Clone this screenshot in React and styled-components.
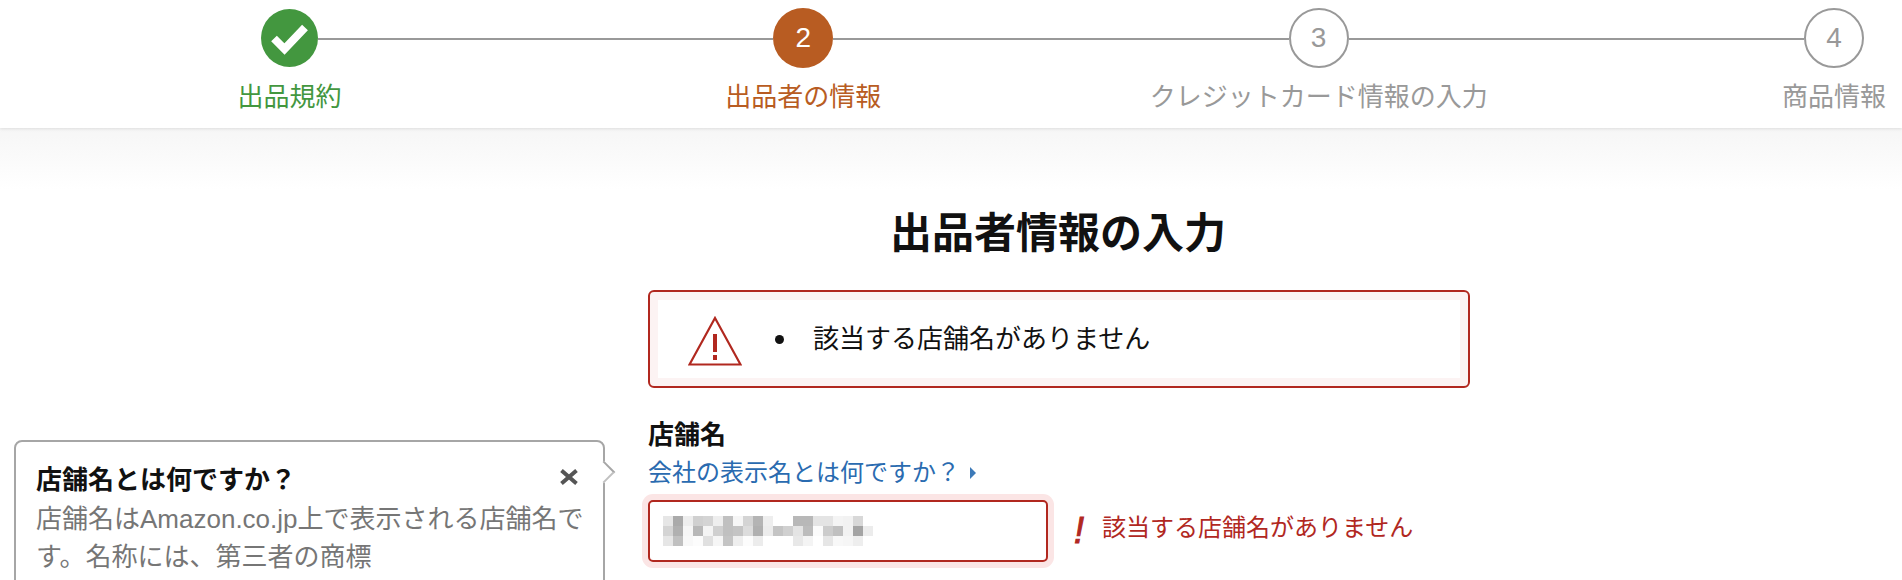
import React from 'react';
import styled, { createGlobalStyle } from 'styled-components';

const FONT = '"Liberation Sans", "Noto Sans CJK JP", sans-serif';
const GREEN = '#43973f';
const ORANGE = '#b85c22';
const GRAY = '#999';
const RED = '#b1281f';

const GlobalStyle = createGlobalStyle`
  html, body {
    margin: 0;
    background: #fff;
    font-family: ${FONT};
  }
`;

const Page = styled.div`
  position: relative;
  height: 580px;
  overflow: hidden;
`;

// Stepper
const Header = styled.header`
  position: relative;
  display: flex;
  box-sizing: border-box;
  height: 128px;
  padding: 8px 38px 0 261px;
  background: #fff;
  box-shadow: 0 1px 3px rgba(0, 0, 0, 0.1);
`;
const Step = styled.div`
  display: flex;
  flex-direction: column;
  align-items: center;
  width: ${props => (props.done ? '57px' : '60px')};
  color: ${props => props.color};
`;
const Circle = styled.div`
  display: flex;
  flex: none;
  align-items: center;
  justify-content: center;
  box-sizing: border-box;
  width: 60px;
  height: 60px;
  border-radius: 50%;
  border: 2px solid ${props => (props.filled ? 'transparent' : GRAY)};
  background: ${props => (props.filled ? props.color : '#fff')};
  color: ${props => (props.filled ? '#fff' : GRAY)};
  font-size: 28px;
`;
const DoneCircle = styled.div`
  display: flex;
  flex: none;
  width: 57px;
  height: 58px;
  margin: 1px 0;
  border-radius: 50%;
  background: ${GREEN};
`;
const StepLabel = styled.div`
  margin-top: 13px;
  font-size: 26px;
  line-height: 32px;
  white-space: nowrap;
`;
const Connector = styled.div`
  flex: 1;
  height: 2px;
  margin-top: 30px;
  background: ${GRAY};
`;

// Main column
const Main = styled.main`
  box-sizing: border-box;
  height: 452px;
  padding: 76px 0 0 648px;
  background: linear-gradient(#f6f6f6, #fff 62px);
`;
const Column = styled.div`
  width: 822px;
`;
const Title = styled.h1`
  margin: 0 0 26px;
  padding-right: 2px;
  font-size: 42px;
  line-height: 60px;
  font-weight: 700;
  text-align: center;
  color: #111;
`;
const Alert = styled.div`
  display: flex;
  align-items: center;
  box-sizing: border-box;
  height: 98px;
  padding-left: 38px;
  border: 2px solid ${RED};
  border-radius: 6px;
  background: #fff;
  box-shadow: inset 0 0 0 8px #fcf3f3;
  svg {
    margin-top: 4px;
  }
`;
const AlertDot = styled.span`
  flex: none;
  width: 9px;
  height: 9px;
  margin: 0 29px 0 33px;
  border-radius: 50%;
  background: #111;
`;
const AlertText = styled.span`
  font-size: 26px;
  line-height: 36px;
  color: #111;
`;
const FieldLabel = styled.div`
  margin-top: 30px;
  font-size: 26px;
  line-height: 34px;
  font-weight: 700;
  color: #111;
`;
const HelpLink = styled.a`
  display: flex;
  align-items: center;
  margin-top: 4px;
  font-size: 24px;
  line-height: 34px;
  color: #2a6bb0;
  text-decoration: none;
  cursor: pointer;
  &::after {
    content: '';
    margin-left: 10px;
    border-left: 6px solid #3d7ab8;
    border-top: 6px solid transparent;
    border-bottom: 6px solid transparent;
  }
`;
const InputRow = styled.div`
  display: flex;
  align-items: center;
  margin-top: 10px;
`;
const InputBox = styled.div`
  display: flex;
  flex: none;
  align-items: center;
  box-sizing: border-box;
  width: 400px;
  height: 62px;
  padding-left: 13px;
  border: 2px solid ${RED};
  border-radius: 5px;
  background: #fff;
  box-shadow: 0 0 0 6px #fbe5e5;
`;
const ErrorMark = styled.span`
  width: 12px;
  margin-left: 26px;
  font-size: 36px;
  line-height: 40px;
  font-weight: 400;
  font-style: italic;
  -webkit-text-stroke: 1px ${RED};
  color: ${RED};
`;
const ErrorText = styled.span`
  margin-left: 16px;
  padding-bottom: 7px;
  font-size: 24px;
  line-height: 34px;
  color: ${RED};
`;

// Popover
const Popover = styled.aside`
  position: absolute;
  top: 440px;
  left: 14px;
  box-sizing: border-box;
  width: 591px;
  height: 200px;
  padding: 20px 10px 0 20px;
  border: 2px solid #a6a6a6;
  border-radius: 8px;
  background: #fff;
  &::after {
    content: '';
    position: absolute;
    top: 22px;
    right: -9px;
    width: 14px;
    height: 14px;
    border-top: 2px solid #a6a6a6;
    border-right: 2px solid #c0c0c0;
    background: #fff;
    transform: rotate(45deg);
  }
`;
const PopoverHead = styled.div`
  display: flex;
  align-items: flex-start;
  justify-content: space-between;
  padding-right: 15px;
  svg {
    margin-top: 7px;
  }
`;
const PopoverTitle = styled.div`
  font-size: 26px;
  line-height: 37px;
  font-weight: 700;
  color: #111;
`;
const PopoverBody = styled.div`
  margin-top: 1px;
  font-size: 26px;
  line-height: 38px;
  color: #767676;
`;

const MOSAIC = [
  ['e6', 'aa', 'ee', 'd0', 'd4', 'ee', 'c0', 'f6', 'd4', 'b4', 'ee', 'ff', 'ff', 'b8', 'b8', 'e4', 'e4', 'f4', 'f2', 'd8', 'ff'],
  ['d4', 'b0', 'f6', 'b8', 'f4', 'd0', 'c0', 'c4', 'dc', 'b0', 'ec', 'c4', 'd0', 'e4', 'bc', 'fb', 'cc', 'c0', 'f2', 'a4', 'ec'],
  ['e6', 'c0', 'f8', 'fc', 'e0', 'f6', 'c4', 'ee', 'fc', 'ec', 'ff', 'ff', 'ff', 'e8', 'f4', 'ff', 'e6', 'f8', 'f6', 'ee', 'ff'],
];

const Mosaic = () => (
  <svg width="210" height="30" viewBox="0 0 210 30" shapeRendering="crispEdges">
    {MOSAIC.map((row, y) =>
      row.map((v, x) => (
        <rect key={`${x}-${y}`} x={x * 10} y={y * 10} width="10" height="10" fill={`#${v}${v}${v}`} />
      ))
    )}
  </svg>
);

const CheckIcon = () => (
  <svg width="57" height="58" viewBox="0 0 57 58">
    <path d="M13 29.500l10.500 10.500L44 18.500" fill="none" stroke="#fff" strokeWidth="8" />
  </svg>
);

const WarningIcon = () => (
  <svg width="54" height="50" viewBox="0 0 54 50">
    <path d="M27 2L52.500 48.500H1.500z" fill="none" stroke={RED} strokeWidth="2.200" />
    <path d="M25 18h4v18h-4zM25 39h4v5h-4z" fill={RED} />
  </svg>
);

const CloseIcon = () => (
  <svg width="18" height="16" viewBox="0 0 18 16">
    <path d="M1.500 1.500l15 13M16.500 1.500l-15 13" fill="none" stroke="#555" strokeWidth="4" />
  </svg>
);

export default function App() {
  return (
    <Page>
      <GlobalStyle />
      <Header>
        <Step done color={GREEN}>
          <DoneCircle><CheckIcon /></DoneCircle>
          <StepLabel>出品規約</StepLabel>
        </Step>
        <Connector />
        <Step color={ORANGE}>
          <Circle filled color={ORANGE}>2</Circle>
          <StepLabel>出品者の情報</StepLabel>
        </Step>
        <Connector />
        <Step color={GRAY}>
          <Circle>3</Circle>
          <StepLabel>クレジットカード情報の入力</StepLabel>
        </Step>
        <Connector />
        <Step color={GRAY}>
          <Circle>4</Circle>
          <StepLabel>商品情報</StepLabel>
        </Step>
      </Header>
      <Main>
        <Column>
          <Title>出品者情報の入力</Title>
          <Alert>
            <WarningIcon />
            <AlertDot />
            <AlertText>該当する店舗名がありません</AlertText>
          </Alert>
          <FieldLabel>店舗名</FieldLabel>
          <HelpLink>会社の表示名とは何ですか？</HelpLink>
          <InputRow>
            <InputBox><Mosaic /></InputBox>
            <ErrorMark>!</ErrorMark>
            <ErrorText>該当する店舗名がありません</ErrorText>
          </InputRow>
        </Column>
      </Main>
      <Popover>
        <PopoverHead>
          <PopoverTitle>店舗名とは何ですか？</PopoverTitle>
          <CloseIcon />
        </PopoverHead>
        <PopoverBody>店舗名はAmazon.co.jp上で表示される店舗名です。名称には、第三者の商標</PopoverBody>
      </Popover>
    </Page>
  );
}
